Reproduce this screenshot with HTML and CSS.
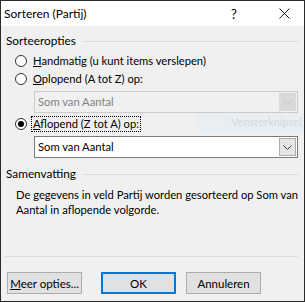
FILE: index.html
```html
<!DOCTYPE html>
<html lang="nl">
<head>
<meta charset="utf-8">
<title>Sorteren (Partij)</title>
<link rel="stylesheet" href="styles.css">
</head>
<body>
<div class="dialog">
  <div class="titlebar">
    <span class="title">Sorteren (Partij)</span>
    <span class="help">?</span>
    <svg class="close" width="11" height="11" viewBox="0 0 11 11"><path d="M0.5 0.5 L10.5 10.5 M10.5 0.5 L0.5 10.5" stroke="#000" stroke-width="0.9" fill="none"/></svg>
  </div>
  <div class="content">
    <div class="group-head"><span>Sorteeropties</span><span class="rule"></span></div>
    <div class="radio-row first"><span class="radio"></span><span class="label"><u>H</u>andmatig (u kunt items verslepen)</span></div>
    <div class="radio-row"><span class="radio"></span><span class="label"><u>O</u>plopend (A tot Z) op:</span></div>
    <div class="combo disabled">
      <span class="value">Som van Aantal</span>
      <span class="arrow"><svg width="9" height="5" viewBox="0 0 9 5"><path d="M0.5 0.5 L4.5 4.5 L8.5 0.5" stroke="#c4c4c4" fill="none"/></svg></span>
    </div>
    <div class="radio-row third"><span class="radio checked"></span><span class="label focus"><u>A</u>flopend (Z tot A) op:</span></div>
    <div class="combo">
      <span class="value">Som van Aantal</span>
      <span class="arrow"><svg width="9" height="5" viewBox="0 0 9 5"><path d="M0.5 0.5 L4.5 4.5 L8.5 0.5" stroke="#404040" fill="none"/></svg></span>
    </div>
    <div class="group-head second"><span>Samenvatting</span><span class="rule"></span></div>
    <p class="summary">De gegevens in veld Partij worden gesorteerd op Som van Aantal in aflopende volgorde.</p>
  </div>
  <div class="footer">
    <div class="sep"></div>
    <div class="buttons">
      <button class="btn"><u>M</u>eer opties...</button>
      <button class="btn default">OK</button>
      <button class="btn">Annuleren</button>
    </div>
  </div>
  <div class="snip">Vensterknipsel</div>
</div>
</body>
</html>
```

FILE: styles.css
```css
* { box-sizing: border-box; }
html, body { margin: 0; padding: 0; background: #f0f0f0; }
body {
  font-family: Lato, "Liberation Sans", Arial, sans-serif;
  font-size: 11.2px;
  color: #000;
}
.dialog {
  position: relative;
  width: 305px;
  height: 302px;
  border: 1px solid #2b2b2b;
  background: #f0f0f0;
  display: flex;
  flex-direction: column;
  overflow: hidden;
}
.titlebar {
  height: 25px;
  background: #fff;
  display: flex;
  align-items: center;
  padding-left: 3px;
  flex: none;
}
.title { font-size: 12px; }
.help {
  margin-left: auto;
  font-size: 13px;
  width: 7px;
}
.close {
  display: block;
  margin-left: 41px;
  margin-right: 14px;
}
.content {
  display: flex;
  flex-direction: column;
}
.group-head {
  display: flex;
  align-items: center;
  height: 16px;
  line-height: 16px;
  margin-top: 7px;
  padding-left: 5px;
  padding-right: 5px;
  font-size: 11.8px;
}
.group-head.second { margin-top: 8px; }
.rule {
  flex: 1;
  height: 1px;
  background: #dcdcdc;
  margin-left: 6px;
}
.radio-row {
  display: flex;
  align-items: center;
  height: 18px;
  padding-left: 14px;
}
.radio-row.first { margin-top: 3px; }
.radio-row.third { margin-top: 2px; }
.radio {
  width: 12px;
  height: 12px;
  border: 1px solid #333;
  border-radius: 50%;
  background: #fff;
  margin-right: 6px;
  display: flex;
  align-items: center;
  justify-content: center;
  flex: none;
}
.radio.checked::after {
  content: "";
  width: 6px;
  height: 6px;
  border-radius: 50%;
  background: #000;
}
.label { line-height: 14px; }
.label.focus {
  outline: 1px dotted #000;
  padding: 0 1px;
  margin-left: -1px;
}
.combo {
  display: flex;
  align-items: stretch;
  height: 22px;
  margin-left: 33px;
  margin-right: 6px;
  margin-top: 3px;
  border: 1px solid #7a7a7a;
  background: #fff;
}
.combo.disabled {
  border-color: #cccccc;
  background: #f0f0f0;
  color: #838383;
}
.combo + .radio-row { margin-top: 2px; }
.value {
  flex: 1;
  padding-left: 3px;
  line-height: 20px;
}
.arrow {
  width: 17px;
  display: flex;
  align-items: center;
  justify-content: center;
  background: #e5e5e5;
  border: 1px solid #adadad;
  margin: 1px;
}
.combo.disabled .arrow {
  background: #d9d9d9;
  border-color: #d9d9d9;
}
.summary {
  margin: 5px 6px 0 15px;
  line-height: 15px;
}
.footer {
  margin-top: auto;
  padding-bottom: 7px;
}
.sep {
  height: 1px;
  background: #dcdcdc;
  margin: 0 6px 0 4px;
}
.buttons {
  display: flex;
  margin-top: 15px;
  padding-left: 6px;
}
.btn {
  width: 75px;
  height: 22px;
  font-family: inherit;
  font-size: 11.5px;
  color: #000;
  background: #e1e1e1;
  border: 1px solid #adadad;
  padding: 0;
  margin-right: 10px;
}
.btn:first-child { margin-right: 19px; }
.btn.default { border: 2px solid #0078d7; }
.snip {
  position: absolute;
  left: 196px;
  top: 112px;
  width: 107px;
  height: 18px;
  background: #e9eef3;
  color: #cfd9e3;
  padding-left: 34px;
  line-height: 18px;
  font-size: 11px;
  white-space: nowrap;
}
```
